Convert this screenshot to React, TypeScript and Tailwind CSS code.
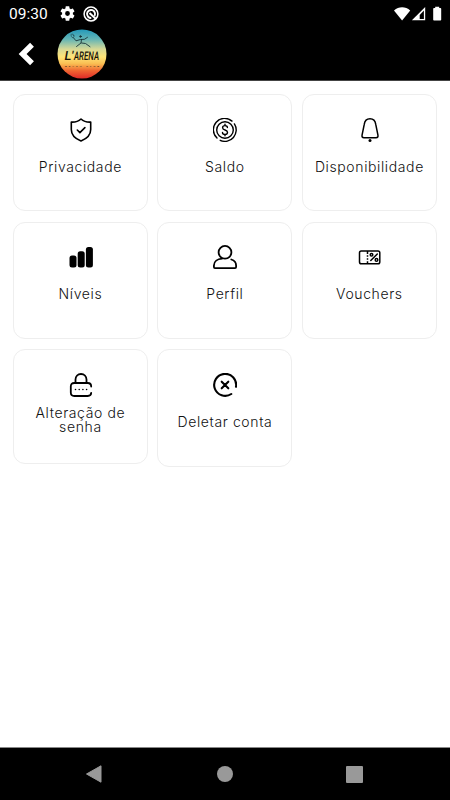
import type { ReactNode } from 'react';
import { clsx } from 'clsx';

interface MenuItem {
  label: string;
  icon: ReactNode;
  multiline?: boolean;
}

const Icon = ({ children, strokeWidth = 1.5 }: { children: ReactNode; strokeWidth?: number }) => (
  <svg
    className="ml-px h-6 w-6 shrink-0"
    viewBox="0 0 24 24"
    fill="none"
    stroke="#000"
    strokeWidth={strokeWidth}
    strokeLinecap="round"
    strokeLinejoin="round"
  >
    {children}
  </svg>
);

const items: MenuItem[] = [
  {
    label: 'Privacidade',
    icon: (
      <Icon strokeWidth={1.6}>
        <path d="M12 1C9.500 3.300 6 4.300 2.300 4.100V11.500C2.300 17 6.500 20.800 12 23c5.500-2.200 9.700-6 9.700-11.500V4.100C18 4.300 14.500 3.300 12 1Z" />
        <path d="m8.300 12 2.600 2.600 5-5" />
      </Icon>
    ),
  },
  {
    label: 'Saldo',
    icon: (
      <Icon strokeWidth={1.4}>
        <circle cx="12" cy="12" r="8.300" />
        <path d="M4 20A11.300 11.300 0 0 1 19 3.100" />
        <path d="M21.400 5.900A11.300 11.300 0 0 1 7.200 22.300" />
        <path d="M14.400 9.500c0-1.200-1-1.900-2.400-1.900s-2.400.800-2.400 2.100c0 3 4.900 1.600 4.900 4.500 0 1.400-1.100 2.200-2.500 2.200s-2.500-.8-2.500-2M12 6.300v1.200M12 16.500v1.200" />
      </Icon>
    ),
  },
  {
    label: 'Disponibilidade',
    icon: (
      <Icon strokeWidth={1.5}>
        <path d="M12 .8C8.700.8 6.700 2.900 6.300 6.200L4.100 16.800c-.4 1.900.2 3 1.900 3h12c1.700 0 2.300-1.100 1.900-3L17.700 6.200C17.300 2.900 15.300.8 12 .8Z" />
        <circle cx="12" cy="22.500" r="1.500" fill="#000" stroke="none" />
      </Icon>
    ),
  },
  {
    label: 'Níveis',
    icon: (
      <svg className="ml-px h-6 w-6 shrink-0" viewBox="0 0 24 24">
        <rect x=".5" y="10.500" width="7" height="12" rx="2.500" />
        <rect x="8.700" y="6.300" width="7" height="16.200" rx="2.500" />
        <rect x="16.900" y="2" width="7" height="20.500" rx="2.500" />
      </svg>
    ),
  },
  {
    label: 'Perfil',
    icon: (
      <Icon strokeWidth={1.8}>
        <circle cx="12" cy="7.300" r="6.400" />
        <path d="M9 13.600C4.500 14 .9 16.500.9 20.500V22c0 .7.400 1.100 1.100 1.100h20c.7 0 1.100-.4 1.100-1.100v-1.500c0-3-2-5.200-4.800-6" />
      </Icon>
    ),
  },
  {
    label: 'Vouchers',
    icon: (
      <Icon strokeWidth={1.5}>
        <rect x="1.500" y="5.900" width="20.300" height="12.900" rx="1.800" />
        <path d="M9.500 6v3M9.500 10.300v1.500M9.500 13.300v1.500M9.500 16.300v2.500" strokeLinecap="butt" />
        <path d="m12.800 15.500 6.500-6.500" />
        <circle cx="13.500" cy="9.700" r="1.300" />
        <circle cx="18.500" cy="14.900" r="1.300" />
      </Icon>
    ),
  },
  {
    label: 'Alteração de senha',
    multiline: true,
    icon: (
      <Icon strokeWidth={1.8}>
        <path d="M6.500 10V6.600C6.500 3.400 8.800 1 12 1s5.500 2.400 5.500 5.600V10" />
        <path d="M22.200 13.500c0-2.400-1.100-3.500-3.500-3.500H5.300c-2.400 0-3.500 1.100-3.500 3.500v6c0 2.400 1.100 3.500 3.500 3.500h13.400c2.400 0 3.500-1.100 3.500-3.200" />
        <path d="M6.500 16.500h.01M10.200 16.500h.01M13.900 16.500h.01M17.600 16.500h.01" strokeWidth="1.600" />
      </Icon>
    ),
  },
  {
    label: 'Deletar conta',
    icon: (
      <Icon strokeWidth={2.100}>
        <path d="M23 13.800A11 11 0 1 0 18.300 21" />
        <path d="m8.700 8.700 6.600 6.600M15.300 8.700l-6.600 6.600" />
      </Icon>
    ),
  },
];

const StatusBar = () => (
  <div className="flex h-[27px] items-center justify-between pl-[9px] pr-2 text-white">
    <div className="flex items-center">
      <span className="w-[51px] pt-px font-['Roboto'] text-[15.500px] leading-[27px]">09:30</span>
      <svg className="h-[15px] w-[15px]" viewBox="2 2 20 20" fill="#fff">
        <path d="M19.140 12.940c.04-.3.060-.61.060-.94s-.02-.64-.07-.94l2.030-1.580a.49.49 0 0 0 .12-.61l-1.920-3.320a.488.488 0 0 0-.59-.22l-2.390.96c-.5-.38-1.030-.7-1.620-.94l-.36-2.540A.484.484 0 0 0 13.920 2.400h-3.840c-.24 0-.43.170-.47.410l-.36 2.540c-.59.240-1.130.570-1.620.94l-2.390-.96a.48.48 0 0 0-.59.220L2.740 8.870a.48.48 0 0 0 .12.610l2.030 1.580c-.05.300-.09.630-.09.940s.02.640.070.940l-2.030 1.580a.49.49 0 0 0-.12.610l1.920 3.320c.12.220.370.290.590.220l2.390-.96c.5.380 1.030.7 1.620.94l.36 2.540c.05.240.240.410.480.410h3.840c.24 0 .44-.17.470-.41l.36-2.540c.59-.24 1.130-.56 1.620-.94l2.390.96c.22.080.470 0 .59-.22l1.920-3.320a.48.48 0 0 0-.12-.61l-2.010-1.580ZM12 15.200a3.200 3.200 0 1 1 0-6.400 3.200 3.200 0 0 1 0 6.400Z" />
      </svg>
      <svg className="ml-2 h-4 w-4" viewBox="0 0 16 16" fill="none" stroke="#fff">
        <circle cx="8" cy="8" r="6.900" strokeWidth="1.500" />
        <path d="M11.500 10A4 4 0 1 0 8.300 12" strokeWidth="1.900" />
        <path d="m6.500 7 6.500 6" strokeWidth="2" />
      </svg>
    </div>
    <svg className="h-4 w-12" viewBox="0 0 48 16" fill="#fff">
      <path d="M0 4.600C4.700.2 11.500.2 16.200 4.600L8.100 14.400Z" />
      <path d="M31.200 1V14.300H17.900Z" />
      <path d="M29.900 4.500v8.500h-4.200V9Z" fill="#000" />
      <path d="M41.200 2V.8h4V2h1.200c.5 0 .8.300.8.800v10.900c0 .5-.3.800-.8.800H40c-.5 0-.8-.3-.8-.8V2.800c0-.5.300-.8.800-.8h1.200Z" />
    </svg>
  </div>
);

const Logo = () => (
  <svg className="h-[50px] w-[50px] overflow-visible" viewBox="0 0 50 50">
    <defs>
      <linearGradient id="sunset" x1="0" y1="0" x2="0" y2="1">
        <stop offset="0" stopColor="#2499ba" />
        <stop offset=".2" stopColor="#64b5b5" />
        <stop offset=".4" stopColor="#d7d996" />
        <stop offset=".56" stopColor="#ffe477" />
        <stop offset=".7" stopColor="#f9bd52" />
        <stop offset=".84" stopColor="#ef6632" />
        <stop offset="1" stopColor="#df2928" />
      </linearGradient>
    </defs>
    <circle cx="25" cy="25" r="24.500" fill="url(#sunset)" />
    <g fill="none" stroke="#18343a" strokeWidth=".9" strokeLinecap="round">
      <ellipse cx="15.500" cy="6.800" rx="1.300" ry="2" transform="rotate(-25 15.500 6.800)" strokeWidth=".5" />
      <path d="m16.500 8.800 2.500 3 4.500-1.300 4-.2 3-2M24.500 10.500l-.5 3.500-4.500 3.500M24.500 14l4 .5 4.500 3.200" />
      <circle cx="23.500" cy="7.500" r=".8" fill="#18343a" />
    </g>
    <g fontFamily="Roboto, sans-serif" fontStyle="italic" fontWeight="500" fill="#17130a" textRendering="geometricPrecision">
      <text x="7.500" y="31" fontSize="12.500" textLength="9" lengthAdjust="spacingAndGlyphs">
        L'
      </text>
      <text x="17" y="30.500" fontSize="12" textLength="25" lengthAdjust="spacingAndGlyphs">
        ARENA
      </text>
    </g>
    <text
      x="8"
      y="37.500"
      textLength="34"
      fontFamily="Liberation Sans, sans-serif"
      fontSize="2.500"
      fontWeight="700"
      fill="#3c2b15"
    >
      BEACH CLUB
    </text>
  </svg>
);

const Header = () => (
  <header className="h-[81px] border-b border-[#444] bg-black">
    <StatusBar />
    <div className="flex h-[53px] items-center">
      <button className="ml-[18px] flex h-6 w-[18px] items-center justify-center" aria-label="Voltar">
        <svg className="h-6 w-[18px]" viewBox="0 0 18 24" fill="none" stroke="#fff" strokeWidth="5.500">
          <path d="M14 2.800 4.600 12l9.400 9.200" />
        </svg>
      </button>
      <div className="ml-[21px]">
        <Logo />
      </div>
    </div>
  </header>
);

const MenuCard = ({ label, icon, multiline }: MenuItem) => (
  <button
    className={clsx(
      'flex w-full flex-col items-center rounded-xl border border-[#eeeeee] bg-white pt-[22.500px]',
      multiline ? 'h-[114.500px]' : 'h-[117.400px]',
    )}
  >
    {icon}
    <span
      className={clsx(
        "text-center font-['Inter'] text-[14px] font-light leading-[14px] tracking-[0.620px] text-[#111]",
        multiline ? 'mt-[9.600px] w-[104px]' : 'mt-[18.300px] whitespace-nowrap',
      )}
    >
      {label}
    </span>
  </button>
);

const NavigationBar = () => (
  <nav className="flex h-[53px] items-center justify-between border-t border-[#888] bg-black pl-[85px] pr-[87px]">
    <svg className="h-[18px] w-[18px]" viewBox="0 0 18 18" fill="#999" stroke="#999" strokeLinejoin="round">
      <path d="M1.500 9 16 .8v16.400Z" />
    </svg>
    <div className="h-4 w-4 rounded-full bg-[#999]" />
    <div className="h-[17px] w-[17px] rounded-[1px] bg-[#999]" />
  </nav>
);

export default function App() {
  return (
    <div className="flex h-[800px] w-[450px] flex-col bg-white">
      <Header />
      <main className="flex-1 pl-[12.900px] pr-[13.100px] pt-[13px]">
        <div className="grid grid-cols-3 items-start gap-x-[9.500px] gap-y-[10.200px]">
          {items.map((item) => (
            <MenuCard key={item.label} {...item} />
          ))}
        </div>
      </main>
      <NavigationBar />
    </div>
  );
}
